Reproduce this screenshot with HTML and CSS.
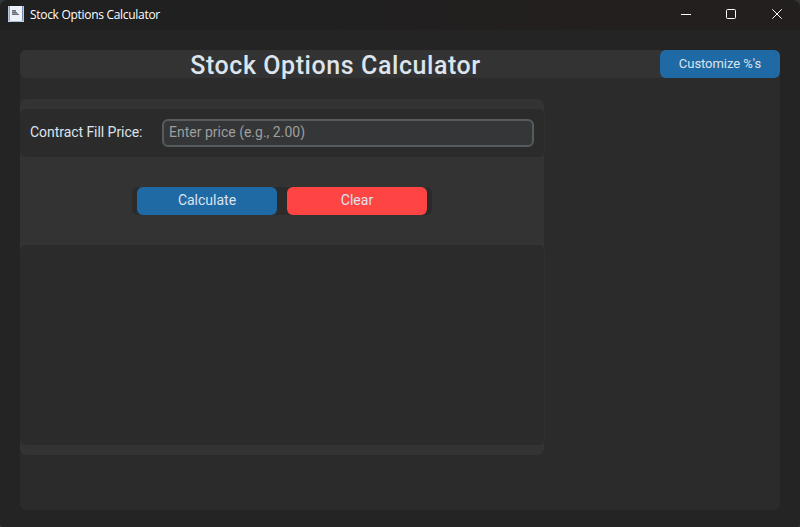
FILE: index.html
```html
<!DOCTYPE html>
<html lang="en">
<head>
<meta charset="utf-8">
<title>Stock Options Calculator</title>
<link rel="stylesheet" href="styles.css">
</head>
<body>
<div class="window">
  <header class="titlebar">
    <svg class="app-icon" width="16" height="16" viewBox="0 0 16 16" shape-rendering="crispEdges">
      <rect width="16" height="16" fill="#eef1f7"/>
      <rect width="1" height="16" fill="#b9c8dc"/>
      <rect x="1" width="1" height="15" fill="#8ea6c6"/>
      <rect x="14" width="1" height="15" fill="#7591b6"/>
      <rect x="15" width="1" height="16" fill="#b9c8dc"/>
      <rect x="2" y="15" width="12" height="1" fill="#a9bfda"/>
      <path d="M4 4h4v1H4zM4 6h5v1H4zM4 8h7v1H4z" fill="#6c7078"/>
      <path d="M4 5h4v1H4zM4 7h6v1H4z" fill="#92969e"/>
    </svg>
    <span class="caption">Stock Options Calculator</span>
    <svg class="controls" width="138" height="30" viewBox="0 0 138 30" fill="none" stroke="#fff">
      <path d="M19 14.5h10"/>
      <rect x="64.5" y="9.500" width="9" height="9" rx="1"/>
      <path d="M110.300 9.300l9.400 9.400M119.700 9.300l-9.400 9.400"/>
    </svg>
  </header>
  <main class="main">
    <div class="heading">
      <h1 class="title">Stock Options Calculator</h1>
      <button class="btn customize">Customize %'s</button>
    </div>
    <section class="panel">
      <div class="price-row">
        <label class="label" for="price">Contract Fill Price:</label>
        <input class="price" id="price" type="text" placeholder="Enter price (e.g., 2.00)">
      </div>
      <div class="actions">
        <button class="btn">Calculate</button>
        <button class="btn clear">Clear</button>
      </div>
      <div class="results"></div>
    </section>
  </main>
</div>
</body>
</html>
```
FILE: styles.css
```css
* { box-sizing: border-box; }
html { background: #30363a; }
body { margin: 0; font-family: Roboto, sans-serif; color: #dce4ee; }
.window {
  display: flex;
  flex-direction: column;
  height: 527px;
  background: #242424;
  border-radius: 8px 8px 4px 4px;
  overflow: hidden;
}
.titlebar {
  display: flex;
  align-items: center;
  height: 30px;
  flex: none;
  padding-left: 8px;
  background: linear-gradient(90deg, #202020, #202020 35%, #231f1e 75%);
}
.app-icon { margin-top: -2px; }
.caption {
  margin-left: 6px;
  font: 12px/16px "Open Sans", sans-serif;
  letter-spacing: -0.3px;
  color: #fff;
}
.controls { margin-left: auto; }
.main {
  flex: 1;
  margin: 20px 20px 17px;
  background: #2b2b2b;
  border-radius: 6px;
}
.heading {
  display: flex;
  height: 28px;
  background: #333;
  border-radius: 6px;
}
.title {
  flex: 1;
  margin: 0;
  padding-right: 9px;
  font-size: 25px;
  font-weight: 500;
  line-height: 31px;
  letter-spacing: 0.57px;
  text-align: center;
}
.btn {
  width: 140px;
  height: 28px;
  padding: 0 0 1px;
  border: 0;
  border-radius: 6px;
  background: #1f6aa5;
  color: #dce4ee;
  font: 14px/27px Roboto, sans-serif;
}
.customize { width: 120px; font-size: 13px; letter-spacing: -0.05px; }
.clear { background: #ff4444; }
.panel {
  display: flex;
  flex-direction: column;
  align-items: center;
  width: 524px;
  height: 356px;
  margin-top: 21px;
  padding: 10px 0;
  background: #333;
  border-radius: 6px;
}
.price-row {
  display: flex;
  align-items: center;
  width: 525px;
  height: 48px;
  padding: 0 10px;
  background: #2b2b2b;
  border: 0 solid #303030;
  border-right-width: 1px;
  border-radius: 6px;
}
.price-row, .results { align-self: flex-start; }
.label { width: 132px; font-size: 14px; line-height: 20px; letter-spacing: -0.05px; padding-bottom: 2px; }
.price {
  width: 372px;
  height: 28px;
  padding: 0 5px 2px;
  border: 2px solid #565b5e;
  border-radius: 6px;
  background: #343638;
  color: #dce4ee;
  font: 14px Roboto, sans-serif;
}
.price::placeholder { color: #9e9e9e; opacity: 1; }
.actions {
  display: flex;
  gap: 10px;
  margin: 30px 0;
  padding: 0 5px;
  background: #2b2b2b;
  border-radius: 6px;
}
.results {
  width: 525px;
  height: 200px;
  background: #2b2b2b;
  border: 0 solid #303030;
  border-right-width: 1px;
  border-radius: 6px;
}
```
